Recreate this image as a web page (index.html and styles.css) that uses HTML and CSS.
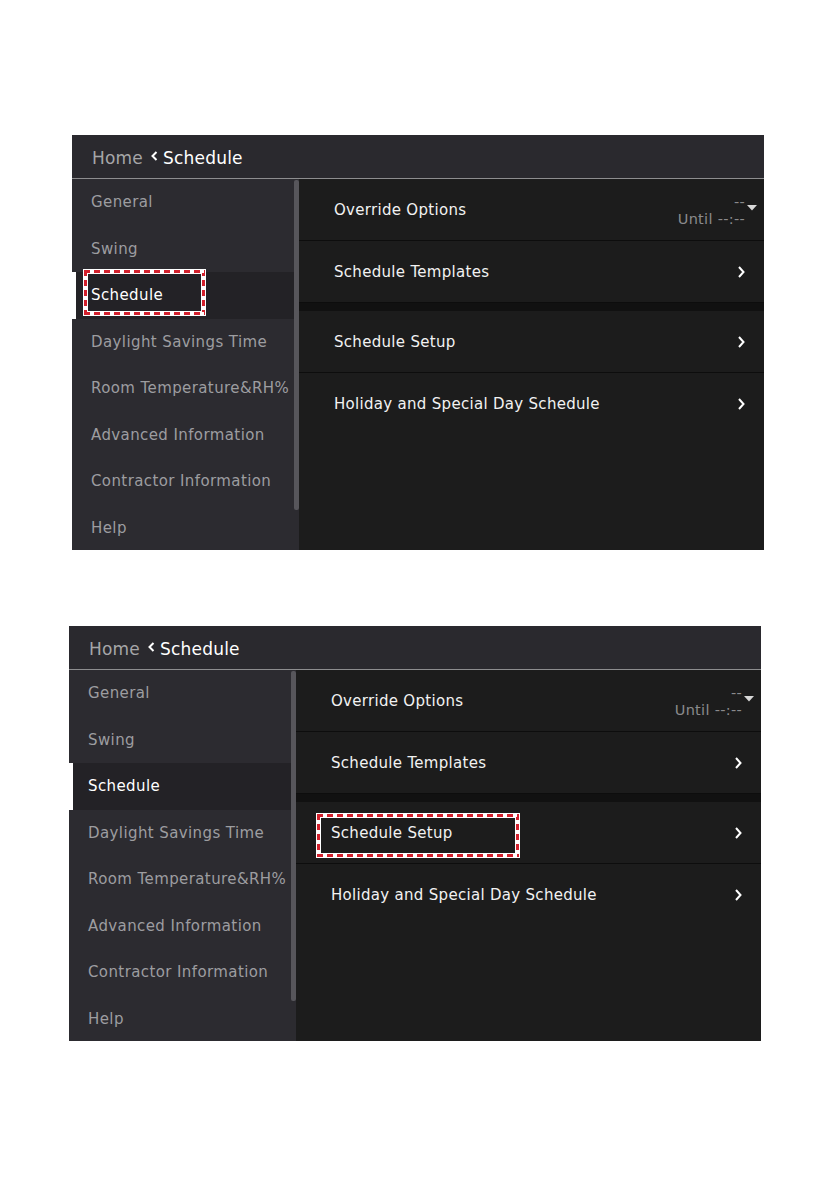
FILE: index.html
```html
<!DOCTYPE html>
<html lang="en">
<head>
    <meta charset="UTF-8">
    <meta name="viewport" content="width=device-width, initial-scale=1.0">
    <title>Schedule</title>
    <link rel="stylesheet" href="styles.css">
</head>
<body>
    <div class="page">

        <!-- step 1: pick Schedule in the menu -->
        <div class="screen screen-first">
            <div class="topbar">
                <span class="crumb-home">Home</span>
                <svg class="crumb-back" width="7" height="10" viewBox="0 0 7 10"><polyline points="5.5,1 1.5,5 5.5,9" fill="none" stroke="#fff" stroke-width="2"/></svg>
                <span class="crumb-current">Schedule</span>
            </div>
            <div class="screen-body">
                <nav class="sidebar">
                    <div class="nav-item">General</div>
                    <div class="nav-item">Swing</div>
                    <div class="nav-item active">Schedule<span class="callout callout-nav"></span></div>
                    <div class="nav-item">Daylight Savings Time</div>
                    <div class="nav-item">Room Temperature&amp;RH%</div>
                    <div class="nav-item">Advanced Information</div>
                    <div class="nav-item">Contractor Information</div>
                    <div class="nav-item">Help</div>
                    <div class="scrollbar"></div>
                </nav>
                <div class="content">
                    <div class="row">
                        <span class="row-label">Override Options</span>
                        <div class="override">
                            <div class="override-text">
                                <div>--</div>
                                <div>Until --:--</div>
                            </div>
                            <svg class="override-arrow" width="10" height="6" viewBox="0 0 10 6"><polygon points="0,0 10,0 5,5.5" fill="#d8d8d8"/></svg>
                        </div>
                    </div>
                    <div class="row">
                        <span class="row-label">Schedule Templates</span>
                        <svg class="chevron" width="7" height="12" viewBox="0 0 7 12"><polyline points="1,1 5.5,6 1,11" fill="none" stroke="#fff" stroke-width="2"/></svg>
                    </div>
                    <div class="group-gap"></div>
                    <div class="row">
                        <span class="row-label">Schedule Setup</span>
                        <svg class="chevron" width="7" height="12" viewBox="0 0 7 12"><polyline points="1,1 5.5,6 1,11" fill="none" stroke="#fff" stroke-width="2"/></svg>
                    </div>
                    <div class="row">
                        <span class="row-label">Holiday and Special Day Schedule</span>
                        <svg class="chevron" width="7" height="12" viewBox="0 0 7 12"><polyline points="1,1 5.5,6 1,11" fill="none" stroke="#fff" stroke-width="2"/></svg>
                    </div>
                </div>
            </div>
        </div>

        <!-- step 2: open Schedule Setup -->
        <div class="screen screen-second">
            <div class="topbar">
                <span class="crumb-home">Home</span>
                <svg class="crumb-back" width="7" height="10" viewBox="0 0 7 10"><polyline points="5.5,1 1.5,5 5.5,9" fill="none" stroke="#fff" stroke-width="2"/></svg>
                <span class="crumb-current">Schedule</span>
            </div>
            <div class="screen-body">
                <nav class="sidebar">
                    <div class="nav-item">General</div>
                    <div class="nav-item">Swing</div>
                    <div class="nav-item active">Schedule</div>
                    <div class="nav-item">Daylight Savings Time</div>
                    <div class="nav-item">Room Temperature&amp;RH%</div>
                    <div class="nav-item">Advanced Information</div>
                    <div class="nav-item">Contractor Information</div>
                    <div class="nav-item">Help</div>
                    <div class="scrollbar"></div>
                </nav>
                <div class="content">
                    <div class="row">
                        <span class="row-label">Override Options</span>
                        <div class="override">
                            <div class="override-text">
                                <div>--</div>
                                <div>Until --:--</div>
                            </div>
                            <svg class="override-arrow" width="10" height="6" viewBox="0 0 10 6"><polygon points="0,0 10,0 5,5.5" fill="#d8d8d8"/></svg>
                        </div>
                    </div>
                    <div class="row">
                        <span class="row-label">Schedule Templates</span>
                        <svg class="chevron" width="7" height="12" viewBox="0 0 7 12"><polyline points="1,1 5.5,6 1,11" fill="none" stroke="#fff" stroke-width="2"/></svg>
                    </div>
                    <div class="group-gap"></div>
                    <div class="row">
                        <span class="row-label">Schedule Setup</span>
                        <span class="callout callout-row"></span>
                        <svg class="chevron" width="7" height="12" viewBox="0 0 7 12"><polyline points="1,1 5.5,6 1,11" fill="none" stroke="#fff" stroke-width="2"/></svg>
                    </div>
                    <div class="row">
                        <span class="row-label">Holiday and Special Day Schedule</span>
                        <svg class="chevron" width="7" height="12" viewBox="0 0 7 12"><polyline points="1,1 5.5,6 1,11" fill="none" stroke="#fff" stroke-width="2"/></svg>
                    </div>
                </div>
            </div>
        </div>

    </div>
</body>
</html>
```

FILE: styles.css
```css
body {
    margin: 0;
    padding: 0;
    background-color: #ffffff;
    font-family: "DejaVu Sans", Verdana, sans-serif;
}
.page {
    padding-top: 135px;
    padding-bottom: 150px;
}
.screen {
    width: 692px;
    height: 415px;
    display: flex;
    flex-direction: column;
    background-color: #1c1c1c;
    overflow: hidden;
}
.screen-first {
    margin-left: 72px;
}
.screen-second {
    margin-left: 69px;
    margin-top: 76px;
}
.topbar {
    height: 44px;
    flex: none;
    box-sizing: border-box;
    display: flex;
    align-items: center;
    padding-left: 20px;
    padding-top: 3px;
    background-color: #2a292e;
    border-bottom: 1px solid #8d8d8f;
    font-size: 17px;
    letter-spacing: 0.2px;
}
.crumb-home {
    color: #a6a6a8;
}
.crumb-back {
    margin-left: 8px;
    margin-right: 5px;
    margin-top: -5px;
}
.crumb-current {
    color: #ffffff;
}
.screen-body {
    flex: 1;
    display: flex;
    min-height: 0;
}
.sidebar {
    position: relative;
    width: 227px;
    flex: none;
    background-color: #2c2b30;
}
.nav-item {
    position: relative;
    height: 46.5px;
    display: flex;
    align-items: center;
    padding-left: 19px;
    font-size: 15px;
    letter-spacing: 0.4px;
    color: #9d9da0;
    white-space: nowrap;
}
.nav-item.active {
    background-color: #232226;
    border-left: 4px solid #ffffff;
    padding-left: 15px;
    color: #ffffff;
}
.scrollbar {
    position: absolute;
    top: 1px;
    right: 0;
    width: 5px;
    height: 330px;
    background-color: #57565b;
    border-radius: 2px;
}
.content {
    flex: 1;
    display: flex;
    flex-direction: column;
}
.row {
    position: relative;
    height: 61px;
    flex: none;
    display: flex;
    align-items: center;
    justify-content: space-between;
    padding-left: 35px;
    padding-right: 19px;
    border-bottom: 1px solid #0d0d0d;
    font-size: 15px;
    letter-spacing: 0.3px;
    color: #f2f2f2;
}
.row:last-child {
    border-bottom: none;
}
.group-gap {
    height: 9px;
    flex: none;
    background-color: #111111;
    margin-top: -1px;
}
.override {
    display: flex;
    align-items: center;
    margin-right: -12px;
}
.override-text {
    text-align: right;
    font-size: 14.5px;
    line-height: 17px;
    letter-spacing: 0.3px;
    color: #8a8a8c;
    margin-top: 2px;
}
.override-arrow {
    margin-left: 2px;
    margin-top: -4px;
}
.chevron {
    display: block;
}

/* red/white dashed callouts drawn on top of the screens */
.callout {
    position: absolute;
    box-sizing: border-box;
    border: 1px solid #ffffff;
    background:
        repeating-linear-gradient(90deg, #d3212d 0 6px, #ffffff 6px 10px) top left / 100% 3px no-repeat,
        repeating-linear-gradient(90deg, #d3212d 0 6px, #ffffff 6px 10px) bottom left / 100% 3px no-repeat,
        repeating-linear-gradient(180deg, #d3212d 0 6px, #ffffff 6px 10px) top left / 3px 100% no-repeat,
        repeating-linear-gradient(180deg, #d3212d 0 6px, #ffffff 6px 10px) top right / 3px 100% no-repeat;
}
.callout::after {
    content: "";
    position: absolute;
    inset: 3px;
    border: 1px solid #ffffff;
}
.callout-nav {
    left: 7px;
    top: -3px;
    width: 123px;
    height: 47px;
}
.callout-row {
    left: 20px;
    top: 11px;
    width: 204px;
    height: 45px;
}
```
